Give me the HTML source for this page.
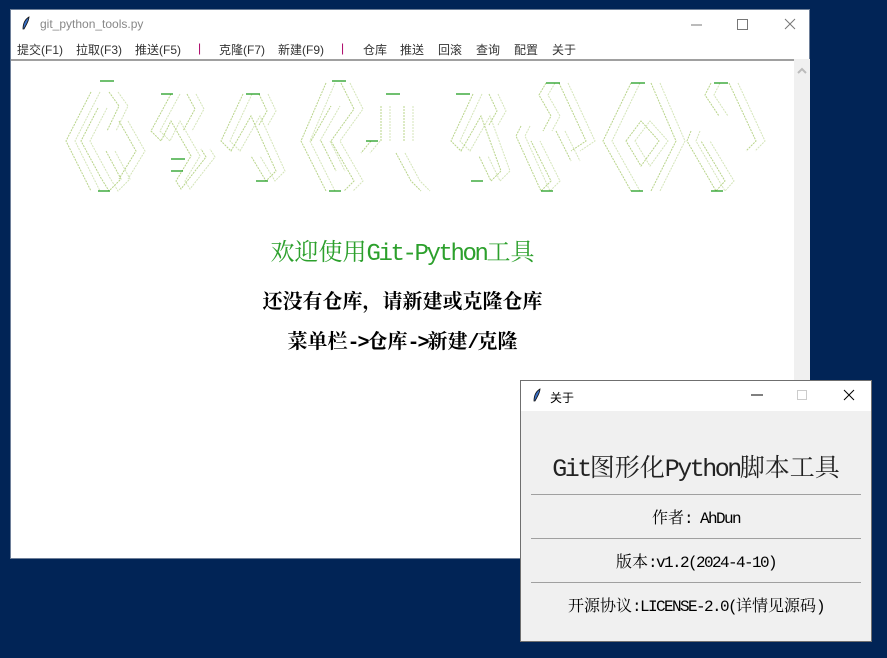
<!DOCTYPE html>
<html><head><meta charset="utf-8"><style>
*{margin:0;padding:0;box-sizing:border-box}
body{width:887px;height:658px;background:#012456;position:relative;overflow:hidden;font-family:"Liberation Sans","Noto Sans CJK SC",sans-serif}
.win{position:absolute;left:10px;top:9px;width:800px;height:550px;background:#fff;border:1px solid #6e7f99}
.tb{height:29px;font-size:12px;color:#888;padding:7px 0 0 29px;position:relative}
.menu{height:20px;font-size:12px;color:#333;position:relative}
.menu span{position:absolute;top:2px}
.content{position:absolute;left:0;top:49px;width:783px;height:499px;border-top:2px solid #a0a0a0}
.sb{position:absolute;left:783px;top:49px;width:16px;height:499px;background:#f0f0f0}
.serif{font-family:"Liberation Mono","Noto Serif CJK SC",monospace}
.serif i{font-style:normal;letter-spacing:-0.1em}
.dlg{position:absolute;left:520px;top:380px;width:352px;height:262px;background:#f0f0f0;border:1px solid #6f6f6f}
.dtb{height:30px;background:#fff;font-size:12px;padding:8px 0 0 29px;position:relative}
.hr{position:absolute;left:10px;width:330px;height:1px;background:#a0a0a0}
.dt{position:absolute;left:0;width:350px;text-align:center;font-size:16px;white-space:nowrap}
</style></head><body>
<div class="win">
 <div class="tb"><svg style="position:absolute;left:10px;top:6px" width="10" height="14"><path d="M8 1 C3 4 2 9 2 13 L3 13 C5 9 8 5 8 1Z" fill="#3a6fc4" stroke="#111" stroke-width=".8"/></svg>git_python_tools.py
  <svg style="position:absolute;left:680px;top:8px" width="110" height="14"><line x1="0" y1="7" x2="11" y2="7" stroke="#777"/><rect x="46.5" y="1.5" width="10" height="10" fill="none" stroke="#777"/><path d="M94 1l10 10M104 1l-10 10" stroke="#777"/></svg></div>
 <div class="menu"><span style="left:6px">提交(F1)</span><span style="left:65px">拉取(F3)</span><span style="left:124px">推送(F5)</span><span style="left:187px;color:#a06">|</span><span style="left:208px">克隆(F7)</span><span style="left:267px">新建(F9)</span><span style="left:330px;color:#a06">|</span><span style="left:352px">仓库</span><span style="left:389px">推送</span><span style="left:427px">回滚</span><span style="left:465px">查询</span><span style="left:503px">配置</span><span style="left:541px">关于</span></div>
 <div class="content">
  <svg width="783" height="160" style="position:absolute;left:0;top:0" fill="none" stroke-width="1">
   <g id="art" stroke="#b8d48a" stroke-dasharray="2 1">
    <path d="M80 31 L55 80 L80 130 M98 31 L108 45 L96 70 M87 47 L70 80 L90 117 L98 130 L110 118 L95 90 M108 60 L125 90 L108 118"/>
    <path d="M160 33 L140 70 L150 80 L160 60 L180 95 L165 120 L170 128 L195 96 L190 88 M176 33 L184 48 L172 70"/>
    <path d="M232 33 L210 80 L220 90 L240 55 L265 110 L255 120 L240 95 M248 33 L256 50 L248 64"/>
    <path d="M315 22 L290 80 L315 130 M330 22 L343 48 L320 80 L343 120 L333 130 M300 80 L320 45 M310 80 L325 110"/>
    <path d="M370 45 L370 80 M393 45 L393 80 M360 80 L350 92 M385 92 L400 120 L410 130"/>
    <path d="M462 33 L440 80 L450 90 L470 55 L490 110 L480 120 L468 95 M478 33 L486 50 L478 64"/>
    <path d="M535 22 L528 34 L540 55 L532 70 M548 22 L575 80 L560 90 M510 65 L505 75 L530 130 L540 120 L520 80 M545 70 L560 100"/>
    <path d="M620 22 L592 80 L620 130 M640 22 L665 80 L640 130 M615 80 L630 60 L648 80 L630 105 Z"/>
    <path d="M700 22 L694 34 L708 55 M718 22 L745 80 L735 90 M680 70 L676 80 L705 130 L714 120 L690 80"/>
   </g>
   <use href="#art" x="9" y="0" stroke-opacity=".6"/>
   <g stroke="#1a9a1a" stroke-width="1.2">
    <path d="M89 20h14M87 130h12M150 33h12M160 98h14M160 110h12M235 33h14M245 120h12M321 20h14M318 130h12M375 33h14M355 80h12M445 33h14M460 120h12M535 22h14M530 130h12M620 22h14M620 130h12M703 22h14M700 130h12"/>
   </g>
  </svg>
  <div class="serif" style="position:absolute;left:0;width:783px;top:171px;text-align:center;font-size:24px;color:#2ca02c">欢迎使用<i>Git-Python</i>工具</div>
  <div class="serif" style="position:absolute;left:0;width:783px;top:224px;text-align:center;font-size:20px;font-weight:bold">还没有仓库，请新建或克隆仓库</div>
  <div class="serif" style="position:absolute;left:0;width:783px;top:264px;text-align:center;font-size:20px;font-weight:bold">菜单栏<i>-&gt;</i>仓库<i>-&gt;</i>新建<i>/</i>克隆</div>
 </div>
 <div class="sb"><svg width="16" height="16" style="position:absolute;top:4px"><path d="M4 10l4-4 4 4" stroke="#bbb" stroke-width="2" fill="none"/></svg></div>
</div>
<div class="dlg">
 <div class="dtb"><svg style="position:absolute;left:11px;top:7px" width="10" height="14"><path d="M8 1 C3 4 2 9 2 13 L3 13 C5 9 8 5 8 1Z" fill="#3a6fc4" stroke="#111" stroke-width=".8"/></svg>关于
  <svg style="position:absolute;left:230px;top:8px" width="110" height="14"><line x1="0" y1="6" x2="12" y2="6" stroke="#000"/><rect x="46.5" y="1.5" width="9" height="9" fill="none" stroke="#ccc"/><path d="M93 1l10 10M103 1l-10 10" stroke="#000"/></svg></div>
 <div class="dt serif" style="top:67px;font-size:25px;color:#222"><i>Git</i>图形化<i>Python</i>脚本工具</div>
 <div class="hr" style="top:113px"></div>
 <div class="dt serif" style="top:124px">作者<i>: AhDun</i></div>
 <div class="hr" style="top:157px"></div>
 <div class="dt serif" style="top:168px">版本<i>:v1.2(2024-4-10)</i></div>
 <div class="hr" style="top:201px"></div>
 <div class="dt serif" style="top:212px">开源协议<i>:LICENSE-2.0(</i>详情见源码<i>)</i></div>
</div>
</body></html>
